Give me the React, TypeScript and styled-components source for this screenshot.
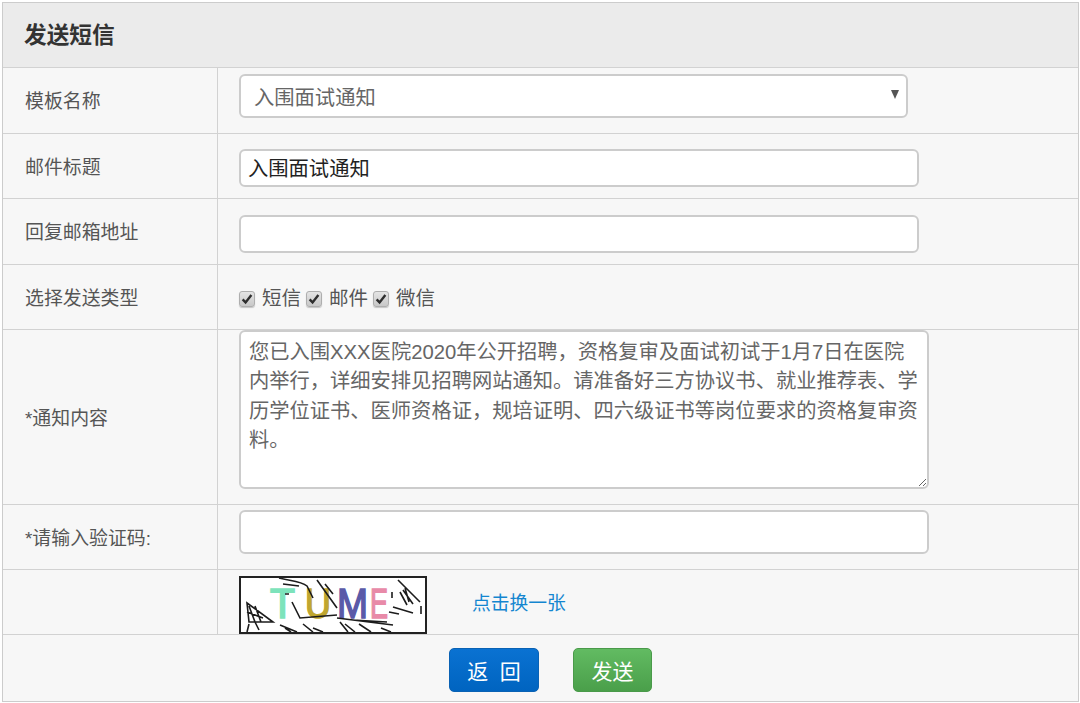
import React from 'react';
import styled, { createGlobalStyle } from 'styled-components';

const GlobalStyle = createGlobalStyle`
    html, body {
        margin: 0;
        padding: 0;
        background: #fff;
    }
    body {
        font-family: "Liberation Sans", "Noto Sans CJK SC", sans-serif;
        color: #555;
    }
`;

const Panel = styled.div`
    box-sizing: border-box;
    width: 1077px;
    height: 700px;
    margin: 2px 0 0 2px;
    border: 1px solid #ccc;
    background: #f7f7f7;
    display: flex;
    flex-direction: column;
    overflow: hidden;
`;

const Header = styled.div`
    box-sizing: border-box;
    height: 65px;
    flex: none;
    padding: 0 0 3px 21px;
    display: flex;
    align-items: center;
    background: #ebebeb;
    border-bottom: 1px solid #d2d2d2;
    font-size: 22.7px;
    font-weight: 700;
    color: #333;
`;

const Row = styled.div<{ $h: number }>`
    box-sizing: border-box;
    height: ${p => p.$h}px;
    flex: none;
    display: grid;
    grid-template-columns: 215px 1fr;
    border-bottom: 1px solid #d2d2d2;
    overflow: hidden;
`;

const Label = styled.div`
    display: flex;
    align-items: center;
    padding: 0 0 2px 22px;
    font-size: 18.9px;
    color: #555;
    border-right: 1px solid #d2d2d2;
`;

const Cell = styled.div<{ $top?: number }>`
    display: flex;
    align-items: flex-start;
    padding: ${p => p.$top ?? 0}px 0 0 21px;
`;

const SelectBox = styled.div`
    box-sizing: border-box;
    width: 669px;
    height: 44px;
    padding: 0 7px 1px 13px;
    display: flex;
    align-items: center;
    justify-content: space-between;
    background: #fff;
    border: 2px solid #ccc;
    border-radius: 6px;
    font-size: 20.3px;
    color: #666;
`;

const Arrow = styled.span`
    width: 0;
    height: 0;
    margin-bottom: 3px;
    border-left: 4.5px solid transparent;
    border-right: 4.5px solid transparent;
    border-top: 9px solid #555;
`;

const TextInput = styled.input<{ $w: number; $h: number }>`
    box-sizing: border-box;
    width: ${p => p.$w}px;
    height: ${p => p.$h}px;
    padding: 0 7px 3px;
    background: #fff;
    border: 2px solid #ccc;
    border-radius: 6px;
    outline: none;
    font-family: inherit;
    font-size: 20.3px;
    color: #222;
`;

const TextArea = styled.textarea`
    box-sizing: border-box;
    display: block;
    width: 690px;
    height: 159px;
    padding: 6px 8px;
    background: #fff;
    border: 2px solid #ccc;
    border-radius: 6px;
    outline: none;
    resize: both;
    font-family: inherit;
    font-size: 20.27px;
    line-height: 29.3px;
    color: #666;
`;

const CheckGroup = styled.div`
    display: flex;
    align-items: center;
    font-size: 19.5px;
    color: #555;
`;

const CheckItem = styled.label`
    display: flex;
    align-items: center;
    gap: 7px;
    margin-right: 5px;
`;

const CheckBox = styled.span`
    box-sizing: border-box;
    width: 16px;
    height: 16px;
    margin-top: 4px;
    display: flex;
    align-items: center;
    justify-content: center;
    background: linear-gradient(#e4e4e4, #c8c8c8);
    border: 1px solid #aeaeae;
    border-radius: 3px;
    box-shadow: 0 1px 1px rgba(0, 0, 0, 0.2);
`;

const CaptchaRow = styled.div`
    display: flex;
    align-items: center;
    gap: 45px;
`;

const CaptchaImage = styled.svg`
    display: block;
    box-sizing: border-box;
    width: 188px;
    height: 58px;
    border: 2px solid #222;
    background: #fff;
`;

const RefreshLink = styled.a`
    padding-bottom: 8px;
    font-size: 18.8px;
    color: #1486d0;
    text-decoration: none;
`;

const Footer = styled.div`
    flex: 1;
    display: flex;
    justify-content: center;
    align-items: flex-start;
    gap: 34px;
    padding: 13px 0 0 20px;
`;

const Button = styled.button<{ $variant: 'blue' | 'green' }>`
    box-sizing: border-box;
    width: ${p => (p.$variant === 'blue' ? 90 : 79)}px;
    height: 44px;
    padding: 0;
    border: 1px solid ${p => (p.$variant === 'blue' ? '#0a62b4' : '#4a9a4a')};
    border-radius: 5px;
    background: ${p => (p.$variant === 'blue'
        ? 'linear-gradient(#0a72d2, #0064c0)'
        : 'linear-gradient(#62bb62, #4a9f4a)')};
    color: #fff;
    font-family: inherit;
    font-size: 21px;
    white-space: pre;
`;

const Check = () => (
    <svg width="12" height="12" viewBox="0 0 11 11">
        <path d="M1.5 5.8 L4.2 8.6 L9.5 1.8" fill="none" stroke="#2e2e2e" strokeWidth="2.2" />
    </svg>
);

const Captcha = () => (
    <CaptchaImage viewBox="0 0 184 54">
        <g fontFamily="'Liberation Sans', sans-serif" fontSize="42" strokeWidth="1.6">
            <text x="29" y="40" fill="#7de3bb" stroke="#7de3bb" textLength="25" lengthAdjust="spacingAndGlyphs">T</text>
            <text x="64" y="40" fill="#bfa62f" stroke="#bfa62f" textLength="26" lengthAdjust="spacingAndGlyphs">U</text>
            <text x="96" y="40" fill="#5a5aa8" stroke="#5a5aa8" textLength="31" lengthAdjust="spacingAndGlyphs">M</text>
            <text x="129" y="40" fill="#e88aa8" stroke="#e88aa8" textLength="18" lengthAdjust="spacingAndGlyphs">E</text>
        </g>
        <g fill="none" stroke="#1c1c1c" strokeWidth="1.6">
            <path d="M38 0 C50 3 60 3 66 8 L72 20 M42 6 L58 8 M76 2 L96 30 M84 6 L92 16 M51 24 L59 40 L96 37 M44 16 L48 16 M96 40 L152 47 M112 42 L146 44" />
            <path d="M6 25 L32 44 L8 44 Z M8 28 L14 44 M14 28 L20 44 M6 34 L22 40 M14 44 L18 52 M8 46 L6 54 M39 47 L56 54 M44 50 L50 54 M62 46 L72 54 M72 50 L82 54 M99 44 L107 54 M104 46 L114 54 M118 46 L130 54 M140 50 L150 54" />
            <path d="M157 2 L179 24 M159 14 L166 27 M162 12 L172 26 M164 10 L168 24 M151 14 L151 20 M152 29 L172 35 M180 28 L180 36 M148 34 L158 36" />
        </g>
    </CaptchaImage>
);

const App = () => (
    <>
        <GlobalStyle />
        <Panel>
            <Header>发送短信</Header>
            <Row $h={66}>
                <Label>模板名称</Label>
                <Cell $top={6}>
                    <SelectBox>
                        入围面试通知
                        <Arrow />
                    </SelectBox>
                </Cell>
            </Row>
            <Row $h={65}>
                <Label>邮件标题</Label>
                <Cell $top={15}>
                    <TextInput $w={680} $h={38} defaultValue="入围面试通知" />
                </Cell>
            </Row>
            <Row $h={66}>
                <Label>回复邮箱地址</Label>
                <Cell $top={16}>
                    <TextInput $w={680} $h={38} />
                </Cell>
            </Row>
            <Row $h={65}>
                <Label>选择发送类型</Label>
                <Cell $top={17}>
                    <CheckGroup>
                        <CheckItem><CheckBox><Check /></CheckBox>短信</CheckItem>
                        <CheckItem><CheckBox><Check /></CheckBox>邮件</CheckItem>
                        <CheckItem><CheckBox><Check /></CheckBox>微信</CheckItem>
                    </CheckGroup>
                </Cell>
            </Row>
            <Row $h={175}>
                <Label>*通知内容</Label>
                <Cell $top={0}>
                    <TextArea defaultValue="您已入围XXX医院2020年公开招聘，资格复审及面试初试于1月7日在医院内举行，详细安排见招聘网站通知。请准备好三方协议书、就业推荐表、学历学位证书、医师资格证，规培证明、四六级证书等岗位要求的资格复审资料。" />
                </Cell>
            </Row>
            <Row $h={65}>
                <Label>*请输入验证码:</Label>
                <Cell $top={5}>
                    <TextInput $w={690} $h={44} />
                </Cell>
            </Row>
            <Row $h={65}>
                <Label />
                <Cell $top={6}>
                    <CaptchaRow>
                        <Captcha />
                        <RefreshLink href="#">点击换一张</RefreshLink>
                    </CaptchaRow>
                </Cell>
            </Row>
            <Footer>
                <Button $variant="blue">返  回</Button>
                <Button $variant="green">发送</Button>
            </Footer>
        </Panel>
    </>
);

export default App;
